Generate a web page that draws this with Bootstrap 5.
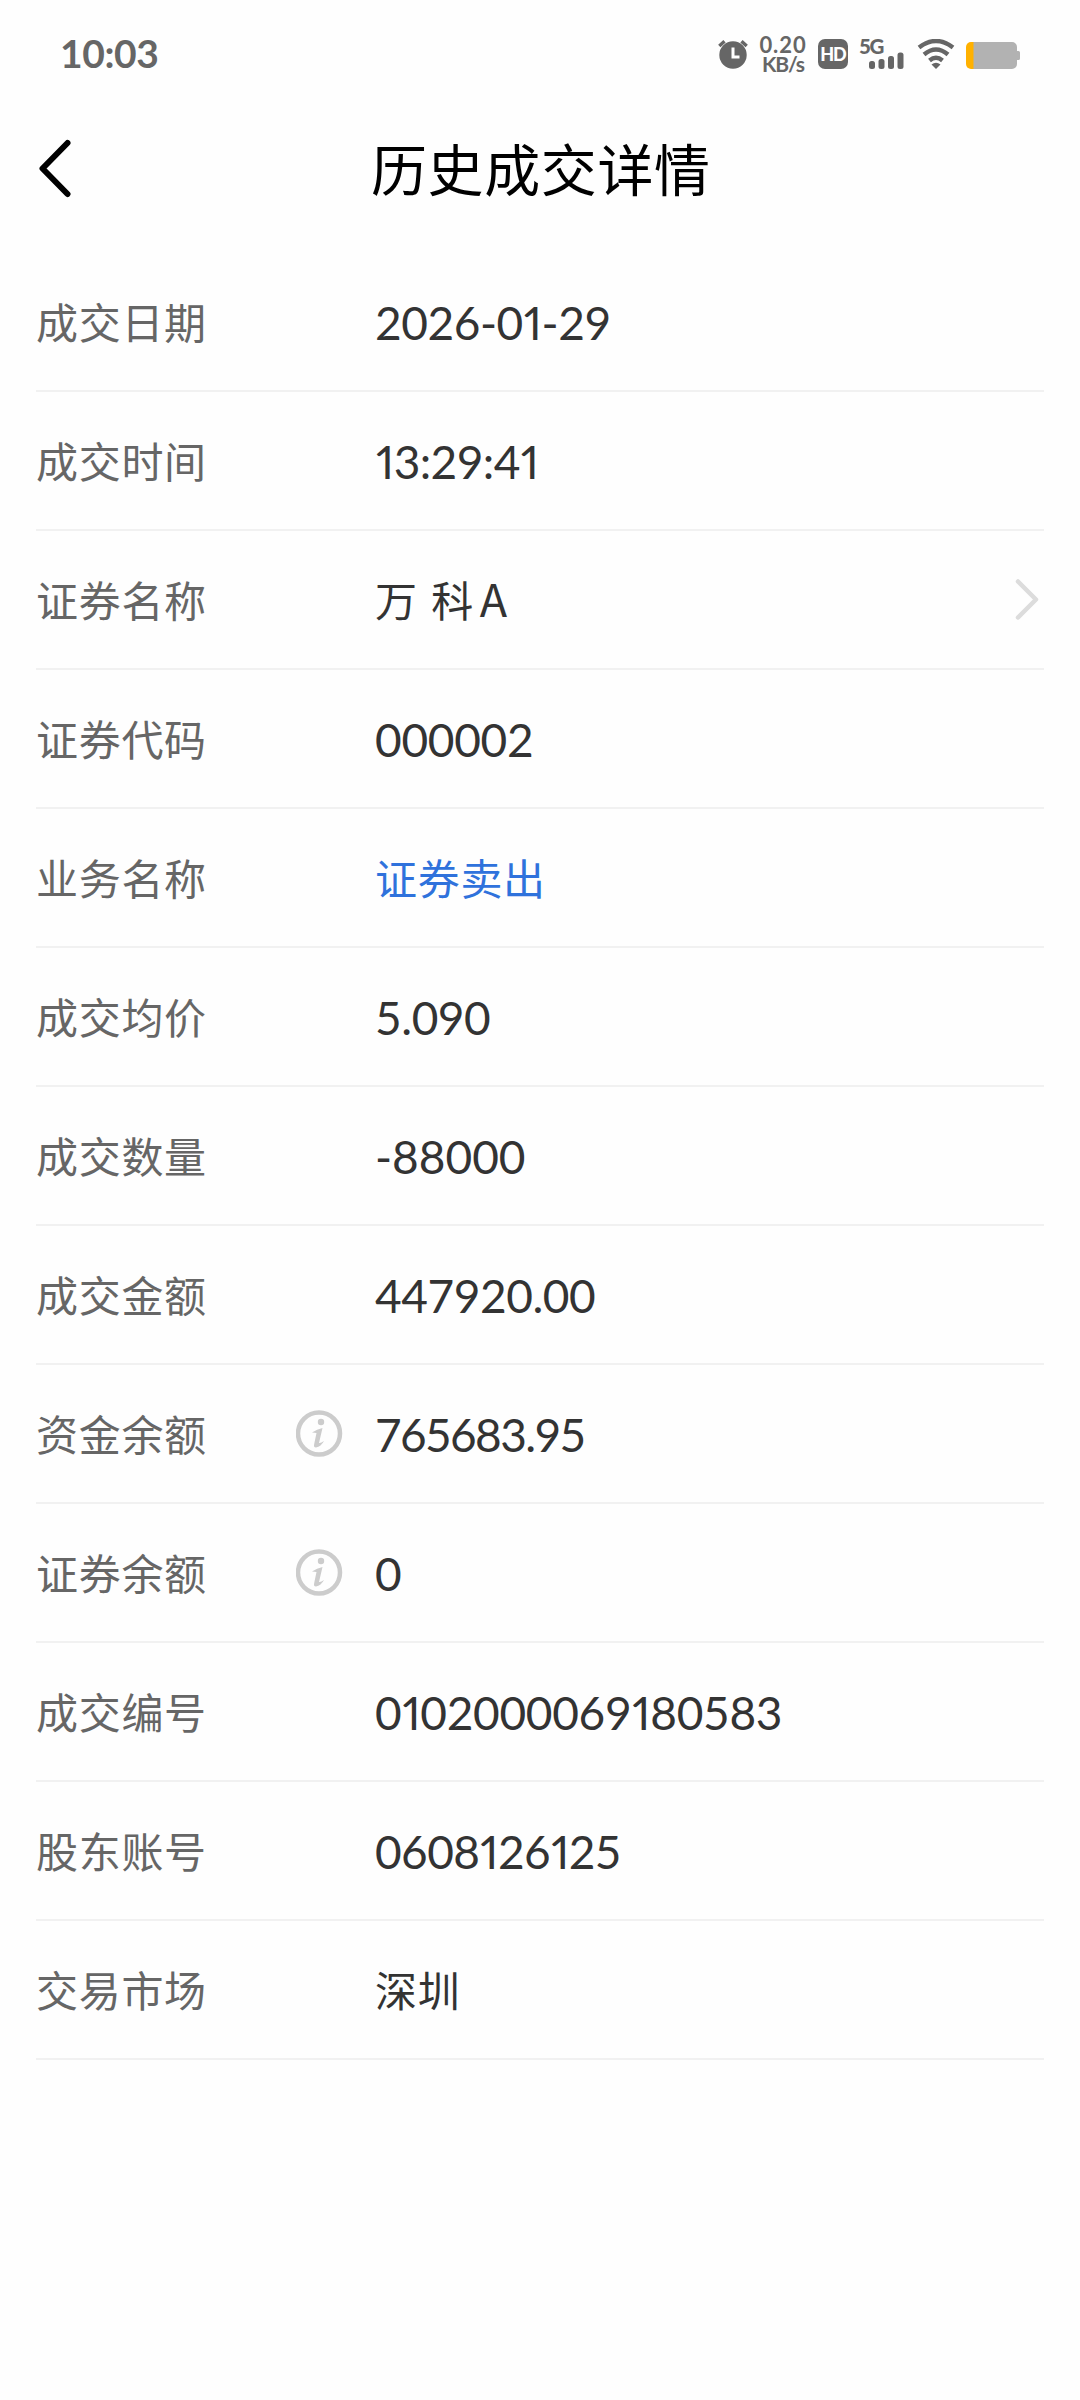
<!DOCTYPE html>
<html lang="zh-CN">
<head>
<meta charset="utf-8">
<meta name="viewport" content="width=device-width, initial-scale=1">
<title>历史成交详情</title>
<link href="https://cdn.jsdelivr.net/npm/bootstrap@5.3.0/dist/css/bootstrap.min.css" rel="stylesheet">
<style>
body{background:#fefefe;font-family:Lato,"Noto Sans CJK SC",sans-serif;color:#333;min-height:2400px}
svg{display:block;flex:none}
.statusbar{height:110px;padding-left:60px;padding-right:60px;color:#666}
.clock{font-size:39px;font-weight:700;line-height:50px;letter-spacing:-.4px;padding-bottom:4px}
.netspeed{width:50px;margin-left:9px;font-weight:700;font-size:22px;line-height:19px;padding-bottom:2px}
.rate{letter-spacing:.9px}
.unit{letter-spacing:-1.1px;font-size:21px}
.hd-badge{width:30px;height:30px;margin-left:10px;margin-bottom:2px;border-radius:7px;background:#666;color:#fff;font-size:18px;font-weight:900;line-height:30px;letter-spacing:-1px}
.cell{width:46px;height:30px;margin-left:11px;margin-bottom:2px;font-weight:900}
.cell-type{font-size:20.5px;line-height:15px;letter-spacing:-1.5px}
.wifi{margin-left:11px;margin-bottom:2px}
.battery{margin-left:10px}
.titlebar{height:116px;padding-left:36px;padding-right:36px}
.back{width:335px}
.page-title{font-size:56px;line-height:80px;letter-spacing:.6px;color:#000;font-weight:400;padding-top:3px}
.detail-list{padding:27px 36px 0}
.detail-row{height:139px;border-bottom:2px solid #f1f1f1;padding-top:2px}
.field-name{width:260px;font-size:42px;letter-spacing:.7px;color:#666;padding-top:2px}
.info{width:79px}
.value{font-size:46px}
.one{font-variant-numeric:proportional-nums;margin-left:1px}
.cjk{font-size:42px;letter-spacing:.7px;word-spacing:2px;padding-top:2px}
.latin{font-family:"Noto Sans CJK SC",sans-serif;font-size:45px;margin-left:6px;line-height:1}
.sell{color:#2f72dc}
.t1{letter-spacing:-.3px}
.t2{letter-spacing:-.45px}
.t3{letter-spacing:-.6px}
.t4{letter-spacing:-1.65px}
</style>
</head>
<body>
<header>
<div class="statusbar d-flex align-items-center justify-content-between">
<div class="clock">10:03</div>
<div class="d-flex align-items-center">
<svg width="32" height="31" viewBox="716 40 32 31" fill="none"><circle cx="732" cy="55" r="13.700" fill="#666"/><path d="M718.300 46 723.500 41.300M745.700 46 740.500 41.300" stroke="#666" stroke-width="3.400"/><path d="M732 47.500v9.500h6.500" stroke="#fff" stroke-width="3"/></svg>
<div class="netspeed d-flex flex-column align-items-center"><span class="rate">0.20</span><span class="unit">KB/s</span></div>
<div class="hd-badge text-center">HD</div>
<div class="cell d-flex flex-column justify-content-between">
<span class="cell-type">5G</span>
<svg class="align-self-end" width="36" height="14" viewBox="0 0 36 14" overflow="visible" fill="#666"><rect x="0" y="6" width="6" height="8" rx="2.500"/><rect x="9.500" y="4" width="6" height="10" rx="2.500"/><rect x="19" y="1" width="6" height="13" rx="2.500"/><rect x="28.500" y="-2.500" width="6" height="16.500" rx="2.500"/></svg>
</div>
<svg class="wifi" width="40" height="30" viewBox="916 40 40 30" fill="none" stroke="#666" stroke-width="4.400"><path d="M919 48.500Q936 35.500 953 48.500M924 55.500Q936 45.500 948 55.500M929.500 61.500Q936 56 942.500 61.500"/><path d="M931.500 65.500Q936 62 940.500 65.500L936 70Z" fill="#666" stroke="none"/></svg>
<svg class="battery" width="54" height="27" viewBox="0 0 54 27"><path d="M7 0H46a5 5 0 0 1 5 5V9h1.500a1.500 1.500 0 0 1 1.500 1.500v6a1.500 1.500 0 0 1-1.500 1.500H51v4a5 5 0 0 1-5 5H7Z" fill="#b2b2b2"/><path d="M7.500 0H5a5 5 0 0 0-5 5V22a5 5 0 0 0 5 5H7.500Z" fill="#ffb100"/></svg>
</div>
</div>
<div class="titlebar d-flex align-items-center">
<div class="back"><svg width="40" height="60" viewBox="36 138 40 60" fill="none" stroke="#000" stroke-width="6" stroke-linecap="round" stroke-linejoin="round"><path d="M67.500 143 42.500 168.500 67.500 194"/></svg></div>
<h1 class="page-title m-0">历史成交详情</h1>
</div>
</header>
<main class="detail-list">
<div class="detail-row d-flex align-items-center"><div class="field-name">成交日期</div><div class="info"></div><div class="value t2">2026-0<span class="one">1</span>-29</div></div>
<div class="detail-row d-flex align-items-center"><div class="field-name">成交时间</div><div class="info"></div><div class="value t3"><span class="one">1</span>3:29:4<span class="one">1</span></div></div>
<div class="detail-row d-flex align-items-center"><div class="field-name">证券名称</div><div class="info"></div><div class="value cjk">万 科<span class="latin">A</span></div><svg class="ms-auto me-1" width="26" height="46" viewBox="0 0 26 46" fill="none" stroke="#dcdcdc" stroke-width="4.500" stroke-linecap="round" stroke-linejoin="round"><path d="M4 3.500 22 21.500 4 39.500"/></svg></div>
<div class="detail-row d-flex align-items-center"><div class="field-name">证券代码</div><div class="info"></div><div class="value t1">000002</div></div>
<div class="detail-row d-flex align-items-center"><div class="field-name">业务名称</div><div class="info"></div><div class="value cjk sell">证券卖出</div></div>
<div class="detail-row d-flex align-items-center"><div class="field-name">成交均价</div><div class="info"></div><div class="value t2">5.090</div></div>
<div class="detail-row d-flex align-items-center"><div class="field-name">成交数量</div><div class="info"></div><div class="value">-88000</div></div>
<div class="detail-row d-flex align-items-center"><div class="field-name">成交金额</div><div class="info"></div><div class="value t2">447920.00</div></div>
<div class="detail-row d-flex align-items-center"><div class="field-name">资金余额</div><div class="info"><svg width="47" height="50" viewBox="0 0 47 50" fill="none"><circle cx="23" cy="23.500" r="21" stroke="#ccc" stroke-width="4.500"/><circle cx="25" cy="12" r="3.200" fill="#ccc"/><path d="M16 22.500Q21 19 26.500 18L23 33Q24.500 33.500 28 31Q25 36.500 20 37.500Q17.300 37.500 18.200 34L20.500 23Q18.500 22.500 16 22.500Z" fill="#ccc"/></svg></div><div class="value t4">765683.95</div></div>
<div class="detail-row d-flex align-items-center"><div class="field-name">证券余额</div><div class="info"><svg width="47" height="50" viewBox="0 0 47 50" fill="none"><circle cx="23" cy="23.500" r="21" stroke="#ccc" stroke-width="4.500"/><circle cx="25" cy="12" r="3.200" fill="#ccc"/><path d="M16 22.500Q21 19 26.500 18L23 33Q24.500 33.500 28 31Q25 36.500 20 37.500Q17.300 37.500 18.200 34L20.500 23Q18.500 22.500 16 22.500Z" fill="#ccc"/></svg></div><div class="value">0</div></div>
<div class="detail-row d-flex align-items-center"><div class="field-name">成交编号</div><div class="info"></div><div class="value t1">0<span class="one">1</span>02000069<span class="one">1</span>80583</div></div>
<div class="detail-row d-flex align-items-center"><div class="field-name">股东账号</div><div class="info"></div><div class="value t3">0608<span class="one">1</span>26<span class="one">1</span>25</div></div>
<div class="detail-row d-flex align-items-center"><div class="field-name">交易市场</div><div class="info"></div><div class="value cjk">深圳</div></div>
</main>
<script src="https://cdn.jsdelivr.net/npm/bootstrap@5.3.0/dist/js/bootstrap.bundle.min.js"></script>
</body>
</html>
